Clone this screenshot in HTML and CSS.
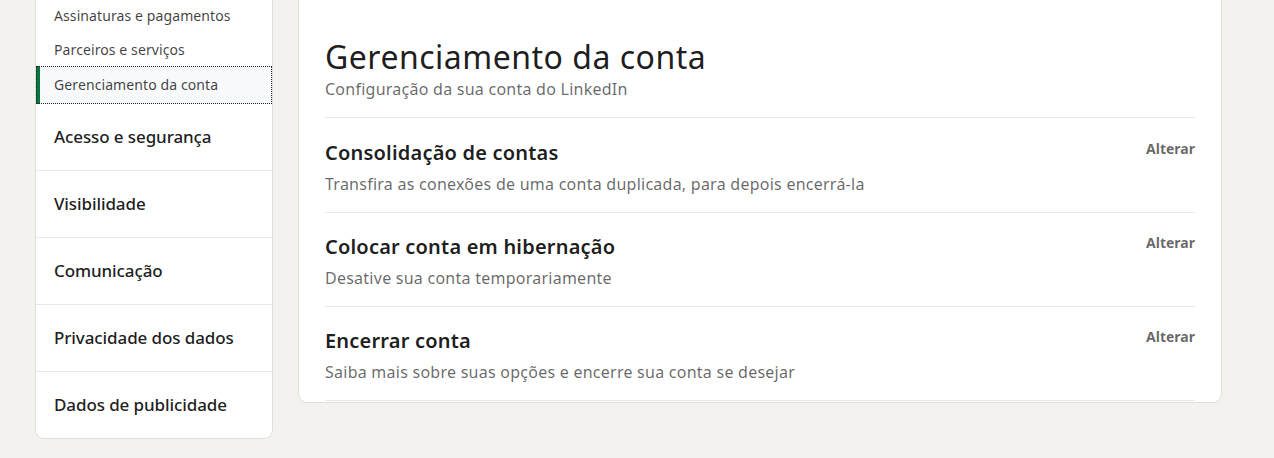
FILE: index.html
```html
<!DOCTYPE html>
<html lang="pt-BR">
<head>
    <meta charset="UTF-8">
    <meta name="viewport" content="width=device-width, initial-scale=1.0">
    <title>Preferências da conta</title>
    <link rel="stylesheet" href="styles.css">
</head>
<body>
    <div class="layout">
        <!-- Menu lateral -->
        <nav class="side-nav">
            <ul class="sub-list">
                <li class="sub-item">Assinaturas e pagamentos</li>
                <li class="sub-item">Parceiros e serviços</li>
                <li class="sub-item active">Gerenciamento da conta</li>
            </ul>
            <ul class="main-list">
                <li class="main-item">Acesso e segurança</li>
                <li class="main-item">Visibilidade</li>
                <li class="main-item">Comunicação</li>
                <li class="main-item">Privacidade dos dados</li>
                <li class="main-item">Dados de publicidade</li>
            </ul>
        </nav>

        <!-- Conteúdo -->
        <main class="panel">
            <header class="panel-header">
                <h1>Gerenciamento da conta</h1>
                <p>Configuração da sua conta do LinkedIn</p>
            </header>

            <section class="setting">
                <div class="setting-text">
                    <h2>Consolidação de contas</h2>
                    <p>Transfira as conexões de uma conta duplicada, para depois encerrá-la</p>
                </div>
                <button class="change">Alterar</button>
            </section>

            <section class="setting">
                <div class="setting-text">
                    <h2>Colocar conta em hibernação</h2>
                    <p>Desative sua conta temporariamente</p>
                </div>
                <button class="change">Alterar</button>
            </section>

            <section class="setting">
                <div class="setting-text">
                    <h2>Encerrar conta</h2>
                    <p>Saiba mais sobre suas opções e encerre sua conta se desejar</p>
                </div>
                <button class="change">Alterar</button>
            </section>
        </main>
    </div>
</body>
</html>
```

FILE: styles.css
```css
/* Base */
* {
    margin: 0;
    padding: 0;
    box-sizing: border-box;
}

body {
    font-family: 'Noto Sans', 'Open Sans', sans-serif;
    background: #F3F2EF;
    color: rgba(0, 0, 0, 0.9);
    height: 100vh;
    overflow: hidden;
}

ul {
    list-style: none;
}

.layout {
    display: grid;
    grid-template-columns: 236px 922px;
    column-gap: 27px;
    align-items: start;
    padding-left: 36px;
}

/* Menu lateral */
.side-nav {
    background: #fff;
    border-radius: 0 0 8px 8px;
    box-shadow: 0 0 0 1px rgba(0, 0, 0, 0.08);
}

.sub-item {
    font-size: 14px;
    line-height: 20px;
    padding: 7px 18px;
    color: rgba(0, 0, 0, 0.75);
    letter-spacing: 0.1px;
}

.sub-item:first-child {
    margin-top: -1px;
}

.sub-item.active {
    padding: 9px 18px 9px 14px;
    margin-top: -1px;
    background: #F8F9FA;
    border-left: 4px solid #057642;
    outline: 1px dotted #222;
    outline-offset: -1px;
}

.main-item {
    font-size: 17px;
    line-height: 24px;
    font-weight: 500;
    padding: 21px 18px;
    border-top: 1px solid #E8E8E8;
    letter-spacing: -0.1px;
}

.main-item:first-child {
    border-top: none;
}

/* Painel principal */
.panel {
    background: #fff;
    border-radius: 0 0 8px 8px;
    box-shadow: 0 0 0 1px rgba(0, 0, 0, 0.08);
    padding: 36px 26px 0;
}

.panel-header {
    padding-bottom: 17px;
    border-bottom: 1px solid #E8E8E8;
}

.panel-header h1 {
    font-size: 32px;
    line-height: 42px;
    font-weight: 400;
    letter-spacing: 0.5px;
}

.panel-header p {
    font-size: 16px;
    line-height: 22px;
    color: rgba(0, 0, 0, 0.6);
    letter-spacing: 0.25px;
}

.setting {
    display: flex;
    justify-content: space-between;
    align-items: flex-start;
    padding: 21px 0 16px;
    border-bottom: 1px solid #E8E8E8;
}

.setting + .setting .change {
    margin-top: -1px;
}

.setting:last-child {
    margin-bottom: 1px;
}

.setting h2 {
    font-size: 20px;
    line-height: 28px;
    font-weight: 600;
    letter-spacing: 0.2px;
}

.setting + .setting h2 {
    margin-top: -1px;
}

.setting p {
    font-size: 16px;
    line-height: 24px;
    color: rgba(0, 0, 0, 0.6);
    margin-top: 5px;
    letter-spacing: 0.25px;
}

.change {
    background: none;
    border: none;
    font-family: inherit;
    font-size: 14px;
    line-height: 20px;
    font-weight: 700;
    color: rgba(0, 0, 0, 0.6);
    cursor: pointer;
}
```
